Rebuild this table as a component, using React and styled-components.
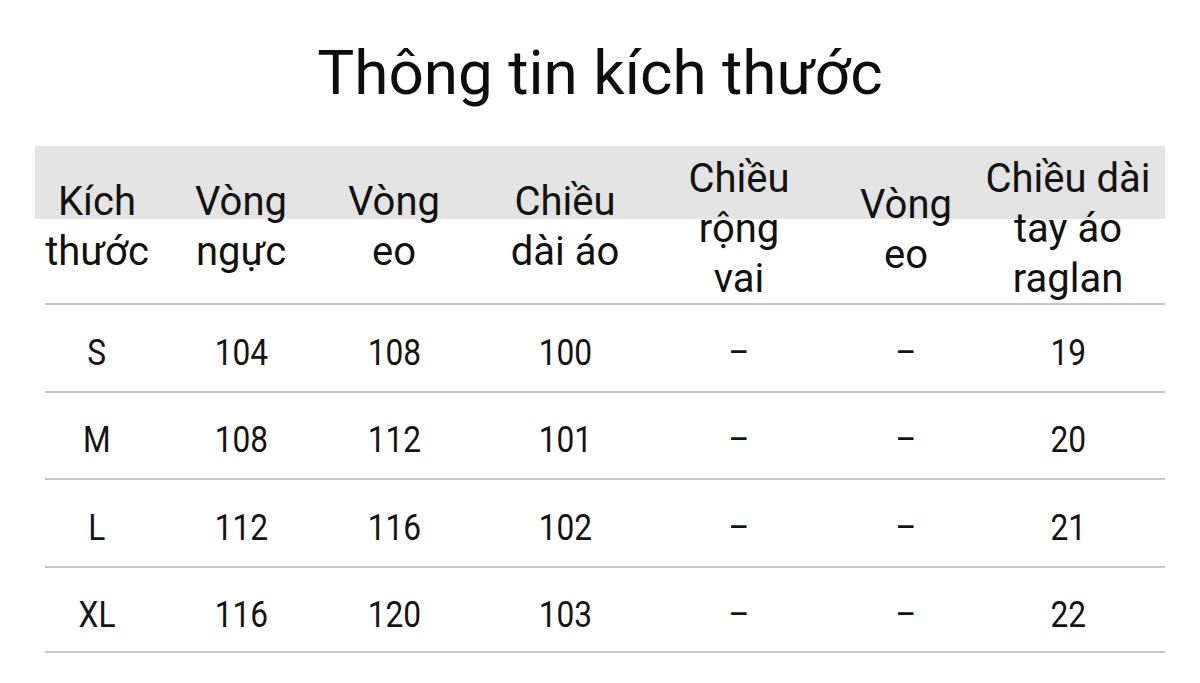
import React from "react"
import styled, { createGlobalStyle } from "styled-components"

const GlobalStyle = createGlobalStyle`
  html, body {
    margin: 0;
    padding: 0;
    background: #ffffff;
  }
  body {
    font-family: Roboto, "Noto Sans", "Liberation Sans", sans-serif;
    color: #111;
  }
`

const columns = "124px 164px 142px 200px 148px 186px 138px"

const headers = [
  ["Kích", "thước"],
  ["Vòng", "ngực"],
  ["Vòng", "eo"],
  ["Chiều", "dài áo"],
  ["Chiều", "rộng", "vai"],
  ["Vòng", "eo"],
  ["Chiều dài", "tay áo", "raglan"],
]

const rows = [
  ["S", "104", "108", "100", "–", "–", "19"],
  ["M", "108", "112", "101", "–", "–", "20"],
  ["L", "112", "116", "102", "–", "–", "21"],
  ["XL", "116", "120", "103", "–", "–", "22"],
]

const App = () => {
  return (
    <Page>
      <GlobalStyle />
      <TitleBar>
        <Title>Thông tin kích thước</Title>
      </TitleBar>
      <Table>
        <HeaderRow>
          {headers.map((lines, i) => (
            <HeadCell key={i} $shift={i === 5 ? 10 : lines.length === 3 ? 8 : 4}>
              {lines.map((l, j) => (
                <span key={j}>{l}</span>
              ))}
            </HeadCell>
          ))}
        </HeaderRow>
        {rows.map((row, i) => (
          <BodyRow key={i}>
            {row.map((v, j) => (
              <Cell key={j}>
                <Value>{v}</Value>
              </Cell>
            ))}
          </BodyRow>
        ))}
      </Table>
    </Page>
  )
}

const Page = styled.div`
  width: 1200px;
  height: 683px;
  overflow: hidden;
  display: flex;
  flex-direction: column;
`

const TitleBar = styled.div`
  height: 146px;
  display: flex;
  align-items: center;
  justify-content: center;
  padding-bottom: 2px;
  box-sizing: border-box;
`

const Title = styled.h1`
  margin: 0;
  font-size: 62px;
  font-weight: 400;
  color: #0d0d0d;
`

const Table = styled.div`
  margin: 0 35px;
  display: flex;
  flex-direction: column;
`

const HeaderRow = styled.div`
  display: grid;
  grid-template-columns: ${columns};
  height: 157px;
  background: linear-gradient(#e3e3e3 0 73px, transparent 73px);
`

const HeadCell = styled.div`
  display: flex;
  flex-direction: column;
  align-items: center;
  justify-content: center;
  font-size: 40px;
  line-height: 50px;
  white-space: nowrap;
  padding-top: ${(p) => p.$shift}px;
`

const BodyRow = styled.div`
  display: grid;
  grid-template-columns: ${columns};
  height: 87.5px;
  background:
    linear-gradient(#c6c6c6, #c6c6c6) 10px 0 / calc(100% - 10px) 2px no-repeat;

  &:last-child {
    background:
      linear-gradient(#c6c6c6, #c6c6c6) 10px 0 / calc(100% - 10px) 2px no-repeat,
      linear-gradient(#c6c6c6, #c6c6c6) 10px 100% / calc(100% - 10px) 2px no-repeat;
  }
`

const Cell = styled.div`
  display: flex;
  align-items: center;
  justify-content: center;
  padding-top: 12px;
`

const Value = styled.span`
  display: inline-block;
  font-size: 36px;
  transform: scaleX(0.88);
  color: #141414;
`

export default App
